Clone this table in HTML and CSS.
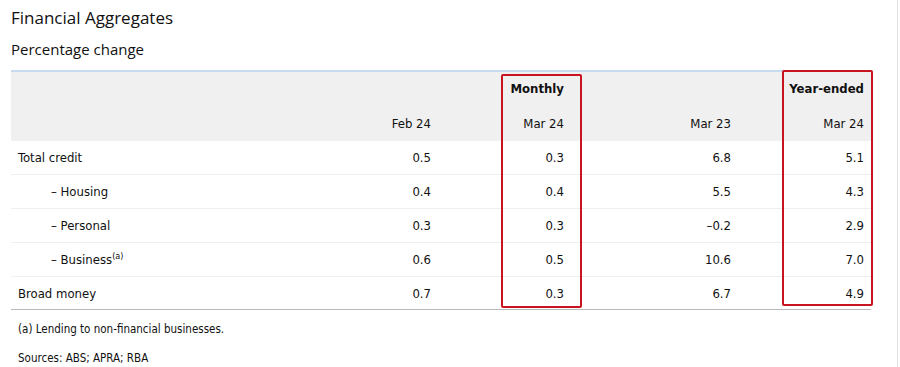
FILE: index.html
```html
<!DOCTYPE html>
<html>
<head>
<meta charset="utf-8">
<link rel="stylesheet" href="styles.css">
</head>
<body>
<div class="page">
  <h1 class="title">Financial Aggregates</h1>
  <h2 class="subtitle">Percentage change</h2>
  <div class="table-wrap">
    <table class="data">
      <colgroup>
        <col class="c-label"><col class="c-num"><col class="c-num"><col class="c-wide"><col class="c-num">
      </colgroup>
      <thead>
        <tr class="group-row">
          <th></th><th></th><th class="num grp">Monthly</th><th></th><th class="num grp">Year-ended</th>
        </tr>
        <tr class="date-row">
          <th></th><th class="num">Feb 24</th><th class="num">Mar 24</th><th class="num">Mar 23</th><th class="num">Mar 24</th>
        </tr>
      </thead>
      <tbody>
        <tr><td class="label">Total credit</td><td class="num">0.5</td><td class="num">0.3</td><td class="num">6.8</td><td class="num">5.1</td></tr>
        <tr><td class="label sub">– Housing</td><td class="num">0.4</td><td class="num">0.4</td><td class="num">5.5</td><td class="num">4.3</td></tr>
        <tr><td class="label sub">– Personal</td><td class="num">0.3</td><td class="num">0.3</td><td class="num">–0.2</td><td class="num">2.9</td></tr>
        <tr><td class="label sub">– Business<sup>(a)</sup></td><td class="num">0.6</td><td class="num">0.5</td><td class="num">10.6</td><td class="num">7.0</td></tr>
        <tr class="last"><td class="label">Broad money</td><td class="num">0.7</td><td class="num">0.3</td><td class="num">6.7</td><td class="num">4.9</td></tr>
      </tbody>
    </table>
    <div class="hl hl-monthly"></div>
    <div class="hl hl-year"></div>
  </div>
  <p class="note">(a) Lending to non-financial businesses.</p>
  <p class="note sources">Sources: ABS; APRA; RBA</p>
</div>
</body>
</html>
```
FILE: styles.css
```css
html, body {
  margin: 0;
  padding: 0;
  background: #fff;
}
body {
  font-family: "DejaVu Sans", sans-serif;
  font-stretch: condensed;
  color: #111;
  overflow: hidden;
}
.page {
  box-sizing: border-box;
  width: 898px;
  height: 367px;
  border-right: 1px solid #e2e2e2;
  padding: 0 0 0 11px;
}
.title {
  margin: 0;
  padding-top: 6px;
  height: 26px;
  font-family: "Open Sans", sans-serif;
  font-stretch: normal;
  font-weight: 400;
  font-size: 17px;
  line-height: 24px;
  color: #111;
}
.subtitle {
  margin: 0;
  height: 38px;
  font-family: "Open Sans", sans-serif;
  font-stretch: normal;
  font-weight: 400;
  font-size: 15px;
  line-height: 35px;
  color: #111;
}
.table-wrap {
  position: relative;
  width: 860px;
}
.data {
  width: 860px;
  border-collapse: collapse;
  table-layout: fixed;
  font-size: 13px;
  border-top: 2px solid #c7dcf0;
  border-bottom: 1px solid #b9b9b9;
}
.c-label { width: 294px; }
.c-num { width: 133px; }
.c-wide { width: 167px; }
.data thead tr { background: #f0f0f0; }
.data th {
  font-weight: 400;
  padding: 0 7px 0 7px;
}
.group-row th { height: 33px; }
.date-row th { height: 36px; }
.data th.grp { font-weight: 700; }
.data td {
  height: 33px;
  padding: 0 7px;
  border-bottom: 1px solid #efefef;
}
.data tr.last td { border-bottom: none; height: 32px; }
.num { text-align: right; }
.label { text-align: left; }
.label.sub { padding-left: 40px; }
sup {
  font-size: 9px;
  vertical-align: 5px;
  line-height: 0;
}
.hl {
  position: absolute;
  box-sizing: border-box;
  border: 2px solid #c8141e;
  border-radius: 2px;
}
.hl-monthly {
  left: 490px;
  top: 4px;
  width: 81px;
  height: 234px;
}
.hl-year {
  left: 771px;
  top: 0;
  width: 91px;
  height: 236px;
}
.note {
  margin: 0;
  padding-left: 7px;
  font-size: 11.5px;
  color: #111;
  height: 29px;
  line-height: 20px;
  padding-top: 9px;
  box-sizing: border-box;
}
.note.sources {
  padding-top: 9px;
}
```
